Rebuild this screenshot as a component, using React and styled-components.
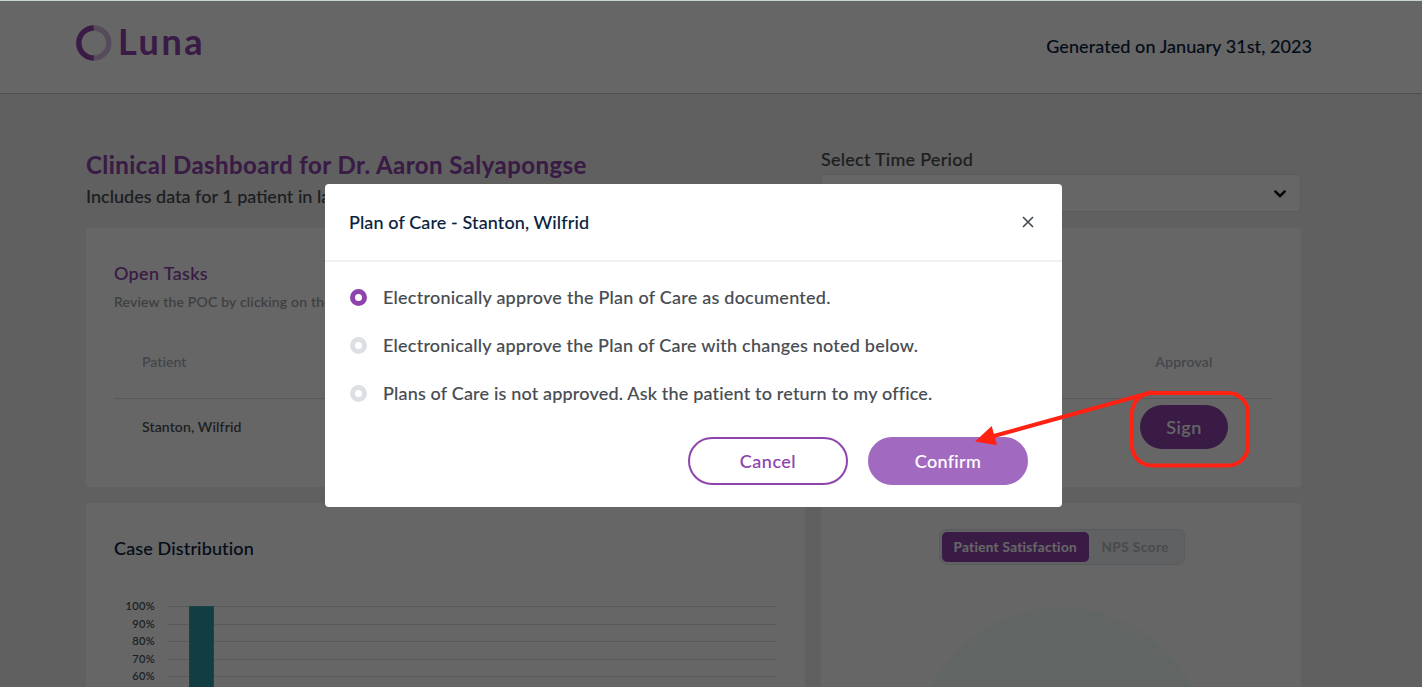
import React from "react";
import styled, { createGlobalStyle } from "styled-components";

const PURPLE = "#8e44ad";
const NAVY = "#0b1f3f";
const SLATE = "#474d52";

const Global = createGlobalStyle`
  *, *::before, *::after { box-sizing: border-box; }
  body {
    margin: 0;
    overflow: hidden;
    font-family: Lato, "Liberation Sans", sans-serif;
    font-weight: 500;
    color: ${SLATE};
    -webkit-text-stroke: 0.1px;
  }
  button { font: inherit; cursor: pointer; }
`;

const Text = styled.span`
  font-size: ${(p) => p.$size || 18}px;
  line-height: ${(p) => p.$line || 24}px;
  font-weight: ${(p) => p.$weight || 500};
  letter-spacing: ${(p) => p.$track || 0}px;
  color: ${(p) => p.$color || SLATE};
  white-space: nowrap;
`;

const Page = styled.div`
  position: relative;
  height: 687px;
  overflow: hidden;
  background: #efefef;
`;

const Header = styled.header`
  display: flex;
  justify-content: space-between;
  height: 94px;
  padding: 0 110px 0 76px;
  background: #fff;
  border-bottom: 1px solid #c4c6c8;
`;

const Brand = styled.div`
  display: flex;
  align-items: center;
  gap: 6px;
  height: 85px;
`;

const Wordmark = styled(Text)`
  margin-bottom: 3px;
`;

const GeneratedOn = styled.div`
  display: flex;
  align-items: center;
  height: 92px;
`;

const Content = styled.main`
  display: flex;
  flex-direction: column;
  gap: 16px;
  width: 1215px;
  margin-left: 86px;
  padding-top: 53px;
`;

const Intro = styled.section`
  display: grid;
  grid-template-columns: 719px 480px;
  gap: 16px;
  height: 65px;
`;

const Headline = styled.div`
  display: flex;
  flex-direction: column;
  gap: 4px;
  padding-top: 3px;
`;

const Period = styled.div`
  display: flex;
  flex-direction: column;
  gap: 3px;
`;

const Select = styled.div`
  display: flex;
  align-items: center;
  justify-content: flex-end;
  flex: none;
  height: 38px;
  padding: 1px 13px 0 0;
  background: #fff;
  border: 1px solid #e2e4e6;
  border-radius: 4px;
`;

const Card = styled.section`
  height: ${(p) => p.$height}px;
  padding: ${(p) => p.$pad || "33px 28px"};
  background: #fff;
  border-radius: 4px;
`;

const CardHead = styled.div`
  display: flex;
  flex-direction: column;
  gap: 6px;
`;

const TableRow = styled.div`
  display: flex;
  justify-content: space-between;
  align-items: center;
  height: ${(p) => p.$height}px;
  padding: 0 0 0 28px;
  margin-top: ${(p) => p.$top || 0}px;
  border-bottom: ${(p) => (p.$rule ? "1px solid #d8dcdf" : "0")};
`;

const ApprovalCell = styled.div`
  display: flex;
  justify-content: center;
  width: 178px;
`;

const SignButton = styled.button`
  width: 88px;
  height: 44px;
  padding: 0 0 1px;
  border: 0;
  border-radius: 22px;
  background: ${PURPLE};
`;

const Lower = styled.div`
  display: grid;
  grid-template-columns: 719px 480px;
  gap: 16px;
`;

const Chart = styled.div`
  display: flex;
  gap: 12px;
  margin-top: 37px;
`;

const Axis = styled.div`
  display: flex;
  flex-direction: column;
  align-items: flex-end;
  width: 41px;
`;

const Plot = styled.div`
  display: flex;
  width: 609px;
  height: 176px;
  padding-left: 22px;
  margin-top: 9px;
  background: repeating-linear-gradient(#dedfe1 0 1px, transparent 1px 17.6px);
`;

const Bar = styled.div`
  width: 25px;
  height: 176px;
  background: #2d98a5;
  border: 1px solid #47a9b4;
  border-bottom: 0;
`;

const Satisfaction = styled(Card)`
  display: flex;
  flex-direction: column;
  align-items: center;
  gap: 42px;
`;

const Segmented = styled.div`
  display: flex;
  width: 246px;
  height: 36px;
  padding: 2px;
  background: #eef2f6;
  border: 1px solid #dfe3e8;
  border-radius: 7px;
`;

const Segment = styled.button`
  width: ${(p) => p.$width}px;
  height: 30px;
  padding: 0;
  border: 0;
  border-radius: 5px;
  line-height: 0;
  background: ${(p) => (p.$active ? PURPLE : "transparent")};
`;

const Gauge = styled.div`
  flex: none;
  width: 293px;
  height: 293px;
  border-radius: 50%;
  background: #f2fcf8;
`;

const Overlay = styled.div`
  position: absolute;
  inset: 0;
  display: flex;
  align-items: flex-start;
  padding: 183px 0 0 325px;
  background: rgba(0, 0, 0, 0.6);
  border-top: 1px solid #c8d3d5;
`;

const Modal = styled.div`
  width: 737px;
  height: 323px;
  margin-top: 0.4px;
  background: #fff;
  border-radius: 4px;
`;

const ModalHeader = styled.div`
  display: flex;
  justify-content: space-between;
  align-items: center;
  height: 78px;
  padding: 0 28px 0 24px;
  border-bottom: 2px solid #edf1f4;
`;

const Options = styled.div`
  padding: 11px 0 0 25px;
`;

const Option = styled.label`
  display: flex;
  align-items: center;
  gap: 16px;
  height: 48px;
`;

const Radio = styled.span`
  width: 17px;
  height: 17px;
  border: 5px solid ${(p) => (p.$checked ? PURPLE : "#dce0e5")};
  border-radius: 50%;
`;

const Actions = styled.div`
  display: flex;
  justify-content: flex-end;
  gap: 20px;
  padding: 20px 34px 0 0;
`;

const Action = styled.button`
  width: 160px;
  height: 48px;
  padding: 0;
  border: 2px solid ${(p) => (p.$primary ? "#a269c1" : PURPLE)};
  border-radius: 24px;
  background: ${(p) => (p.$primary ? "#a269c1" : "#fff")};
`;

const Annotation = styled.svg`
  position: absolute;
  left: 0;
  top: 0;
`;

const ticks = ["100%", "90%", "80%", "70%", "60%"];

const choices = [
  { label: "Electronically approve the Plan of Care as documented.", track: 0.235 },
  { label: "Electronically approve the Plan of Care with changes noted below.", track: 0.22 },
  { label: "Plans of Care is not approved. Ask the patient to return to my office.", track: 0.175 },
];

function Logo() {
  return (
    <Brand>
      <svg width="36" height="36" viewBox="0 0 36 36" fill="none" stroke={PURPLE} strokeWidth="5.4">
        <path d="M17.8 3A15 15 0 0 0 17.8 33" />
        <path d="M17.8 3A15 15 0 0 1 17.8 33" opacity="0.36" />
      </svg>
      <Wordmark $size={36} $line={42} $weight={700} $track={2.6} $color={PURPLE}>Luna</Wordmark>
    </Brand>
  );
}

export default function App() {
  return (
    <Page>
      <Global />
      <Header>
        <Logo />
        <GeneratedOn>
          <Text $track={0.07} $color={NAVY}>Generated on January 31st, 2023</Text>
        </GeneratedOn>
      </Header>

      <Content>
        <Intro>
          <Headline>
            <Text $size={24} $line={30} $weight={700} $track={0.44} $color={PURPLE}>
              Clinical Dashboard for Dr. Aaron Salyapongse
            </Text>
            <Text>Includes data for 1 patient in last</Text>
          </Headline>
          <Period>
            <Text $track={0.25}>Select Time Period</Text>
            <Select>
              <svg width="14" height="10" viewBox="0 0 14 10" fill="none" stroke="#000" strokeWidth="2.4" strokeLinecap="round" strokeLinejoin="round">
                <path d="M2.3 2.4 7 7.2 11.7 2.4" />
              </svg>
            </Select>
          </Period>
        </Intro>

        <Card $height={259}>
          <CardHead>
            <Text $track={0.35} $color={PURPLE}>Open Tasks</Text>
            <Text $size={14} $line={22} $track={0.19} $color="#9aa1a5">
              Review the POC by clicking on the
            </Text>
          </CardHead>
          <TableRow $height={73} $top={13} $rule>
            <Text $size={14} $line={20} $track={0.1} $color="#a6adb8">Patient</Text>
            <ApprovalCell>
              <Text $size={14} $line={20} $track={0.25} $color="#a6adb8">Approval</Text>
            </ApprovalCell>
          </TableRow>
          <TableRow $height={56}>
            <Text $size={14} $line={20} $track={0.15}>Stanton, Wilfrid</Text>
            <ApprovalCell>
              <SignButton><Text $track={0.5} $color="#fff">Sign</Text></SignButton>
            </ApprovalCell>
          </TableRow>
        </Card>

        <Lower>
          <Card $height={320}>
            <Text $track={0.14} $color={NAVY}>Case Distribution</Text>
            <Chart>
              <Axis>
                {ticks.map((t) => (
                  <Text key={t} $size={11} $line={17.6} $track={0.35} $color="#444e5e">{t}</Text>
                ))}
              </Axis>
              <Plot><Bar /></Plot>
            </Chart>
          </Card>
          <Satisfaction $height={320} $pad="26px 0 0 1px">
            <Segmented>
              <Segment $width={148} $active>
                <Text $size={13.5} $line={18} $weight={700} $track={0.33} $color="#fff">Patient Satisfaction</Text>
              </Segment>
              <Segment $width={93}>
                <Text $size={13.5} $line={18} $weight={700} $track={0.5} $color="#b7bcc4">NPS Score</Text>
              </Segment>
            </Segmented>
            <Gauge />
          </Satisfaction>
        </Lower>
      </Content>

      <Overlay>
        <Modal>
          <ModalHeader>
            <Text $track={0.11} $color={NAVY}>Plan of Care - Stanton, Wilfrid</Text>
            <svg width="12" height="12" viewBox="0 0 12 12" fill="none" stroke="#474d52" strokeWidth="1.7">
              <path d="M1 1 11 11M11 1 1 11" />
            </svg>
          </ModalHeader>
          <Options>
            {choices.map((c, i) => (
              <Option key={c.label}>
                <Radio $checked={i === 0} />
                <Text $track={c.track}>{c.label}</Text>
              </Option>
            ))}
          </Options>
          <Actions>
            <Action><Text $track={0.5} $color={PURPLE}>Cancel</Text></Action>
            <Action $primary><Text $track={0.3} $color="#fff">Confirm</Text></Action>
          </Actions>
        </Modal>
      </Overlay>

      <Annotation width="1422" height="687" viewBox="0 0 1422 687">
        <rect x="1132" y="393" width="116" height="72.5" rx="20" fill="none" stroke="#ff2213" strokeWidth="4" />
        <path d="M1153 392 992 436.5" stroke="#ff2213" strokeWidth="4" />
        <path d="M975 441.5 991.7 426 997 445.3Z" fill="#ff2213" />
      </Annotation>
    </Page>
  );
}
